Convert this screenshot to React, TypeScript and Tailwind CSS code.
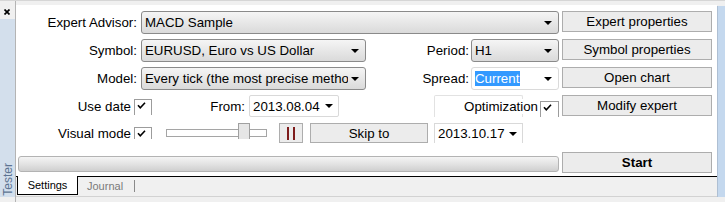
import React from 'react';

const Arrow = () => (
  <svg width="8" height="4" viewBox="0 0 8 4" className="shrink-0">
    <polygon points="0,0 8,0 4,4" fill="#000" />
  </svg>
);

const Check = () => (
  <svg width="9" height="7" viewBox="0 0 9 7">
    <path d="M1 3.2 L3.3 5.8 L8 0.8" fill="none" stroke="#000" strokeWidth="1.6" />
  </svg>
);

type ComboProps = { w: string; white?: boolean; children: React.ReactNode };

const Combo = ({ w, white, children }: ComboProps) => (
  <div
    className={`${w} h-[23px] flex items-center pl-[3px] pr-[6px] rounded-[3px] border ${
      white ? 'bg-white border-[#dadada]' : 'bg-gradient-to-b from-[#f5f5f5] to-[#dadada] border-[#8a8a8a]'
    }`}
  >
    <div className="flex-1 mr-[3px] overflow-hidden whitespace-nowrap leading-[15px]">{children}</div>
    <Arrow />
  </div>
);

type BtnProps = { w: string; bold?: boolean; children: React.ReactNode };

const Btn = ({ w, bold, children }: BtnProps) => (
  <button
    className={`${w} h-[21px] shrink-0 border border-[#adadad] bg-[#ececec] flex items-center justify-center leading-[15px] ${
      bold ? 'font-bold' : ''
    }`}
  >
    {children}
  </button>
);

const Label = ({ w, children }: { w: string; children: React.ReactNode }) => (
  <div className={`${w} h-[23px] shrink-0 flex items-center justify-end pr-[4px] whitespace-nowrap`}>{children}</div>
);

export default function App() {
  return (
    <div className="w-[725px] h-[202px] overflow-hidden bg-[#f0f0f0] border-t border-[#d6d6d6] flex font-['Liberation_Sans',Arial,sans-serif] text-[13.3px] text-black">
      {/* left dock strip */}
      <div className="w-[15px] h-full flex flex-col">
        <div className="h-[18px] pl-[4px] pt-[8px]">
          <svg width="6" height="6" viewBox="0 0 6 6">
            <path d="M0.5 0.5 L5.5 5.5 M5.5 0.5 L0.5 5.5" stroke="#000" strokeWidth="1.7" />
          </svg>
        </div>
        <div className="h-[178px] bg-[#d3dfec] flex flex-col justify-end items-center pb-[1px]">
          <div className="[writing-mode:vertical-rl] rotate-180 text-[12px] leading-[12px] text-[#5d7492]">Tester</div>
        </div>
      </div>

      {/* main column */}
      <div className="w-[702px] h-full border-l border-[#b4b4b4] flex flex-col">
        <div className="h-[4px]" />
        <div className="h-[171px] bg-white flex flex-col pt-[6px]">
          {/* row 1 */}
          <div className="h-[23px] flex items-start">
            <Label w="w-[125px]">Expert Advisor:</Label>
            <Combo w="w-[418px]">MACD Sample</Combo>
            <div className="ml-[3px]">
              <Btn w="w-[150px]">Expert properties</Btn>
            </div>
          </div>
          {/* row 2 */}
          <div className="h-[23px] mt-[5px] flex items-start">
            <Label w="w-[125px]">Symbol:</Label>
            <Combo w="w-[225px]">EURUSD, Euro vs US Dollar</Combo>
            <div className="w-[105px] h-[23px] flex items-center justify-end pr-[2px]">Period:</div>
            <Combo w="w-[88px]">H1</Combo>
            <div className="ml-[3px]">
              <Btn w="w-[150px]">Symbol properties</Btn>
            </div>
          </div>
          {/* row 3 */}
          <div className="h-[23px] mt-[5px] flex items-start">
            <Label w="w-[125px]">Model:</Label>
            <Combo w="w-[225px]">Every tick (the most precise method)</Combo>
            <div className="w-[105px] h-[23px] flex items-center justify-end pr-[2px]">Spread:</div>
            <Combo w="w-[88px]" white>
              <span className="bg-[#3399ff] text-white pr-[1px]">Current</span>
            </Combo>
            <div className="ml-[3px]">
              <Btn w="w-[150px]">Open chart</Btn>
            </div>
          </div>
          {/* row 4 */}
          <div className="h-[23px] mt-[5px] flex items-start">
            <div className="w-[118px] h-[23px] flex items-center justify-end pr-[3px]">Use date</div>
            <div className="w-[18px] h-[16px] mt-[4px] border-l border-t border-r border-[#9c9c9c] bg-white pl-[2px] pt-[2px]">
              <Check />
            </div>
            <div className="w-[97px] h-[23px] flex items-center justify-end pr-[4px]">From:</div>
            <div className="w-[90px] h-[22px] flex items-center pl-[3px] pr-[5px] border border-[#d9d9d9] rounded-[2px] bg-white">
              <div className="flex-1 leading-[15px]">2013.08.04</div>
              <Arrow />
            </div>
            <div className="relative w-[125px] h-[22px] ml-[95px]">
              <div className="absolute left-0 top-0 w-[89px] h-[22px] border-l border-t border-r border-[#e2e2e2] rounded-t-[2px]" />
              <div className="relative h-[22px] flex items-start justify-end">
                <span className="bg-white leading-[15px] mt-[4px] pr-[2px]">Optimization</span>
                <div className="w-[19px] h-[16px] mt-[6px] border-l border-t border-r border-[#9c9c9c] bg-white pl-[2px] pt-[2px]">
                  <Check />
                </div>
              </div>
            </div>
            <div className="ml-[3px]">
              <Btn w="w-[150px]">Modify expert</Btn>
            </div>
          </div>
          {/* row 5 */}
          <div className="h-[20px] mt-[5px] flex items-start">
            <div className="w-[118px] h-[16px] overflow-hidden flex justify-end pr-[3px] pt-[3px] leading-[15px]">Visual mode</div>
            <div className="w-[18px] h-[12px] mt-[4px] border-l border-t border-r border-[#9c9c9c] bg-white pl-[2px] pt-[2px] overflow-hidden">
              <Check />
            </div>
            <div className="relative w-[101px] h-[16px] ml-[14px] overflow-hidden">
              <div className="mt-[6px] h-[8px] border border-[#a5a5a5] bg-white" />
              <div className="absolute left-[72px] top-0 w-[12px] h-[18px] border border-[#a0a0a0] bg-[#e6e6e6]" />
            </div>
            <button className="w-[24px] h-[20px] ml-[12px] border border-[#adadad] bg-[#ececec] flex items-center justify-center gap-[4px]">
              <div className="w-[2px] h-[13px] bg-[#7e1c1c]" />
              <div className="w-[2px] h-[13px] bg-[#7e1c1c]" />
            </button>
            <button className="w-[118px] h-[20px] ml-[7px] border border-[#adadad] bg-[#ececec] flex items-center justify-center leading-[15px]">
              Skip to
            </button>
            <div className="w-[89px] h-[20px] ml-[6px] flex items-center pl-[3px] pr-[5px] border-l border-t border-r border-[#d9d9d9] bg-white">
              <div className="flex-1 leading-[15px]">2013.10.17</div>
              <Arrow />
            </div>
          </div>
          {/* row 6 */}
          <div className="h-[21px] mt-[9px] flex items-start">
            <div className="w-[541px] h-[16px] ml-[2px] mt-[4px] rounded-[3px] border border-[#b3b3b3] bg-gradient-to-b from-[#f4f4f4] via-[#e3e3e3] to-[#cfcfcf]" />
            <div className="ml-[3px]">
              <Btn w="w-[150px]" bold>
                Start
              </Btn>
            </div>
          </div>
        </div>

        {/* tabs */}
        <div className="h-[19px] flex items-start text-[11px] leading-[13px]">
          <div className="w-[1px] h-[19px] border-t border-black" />
          <div className="w-[61px] h-[19px] bg-white border-l border-r border-b border-black flex items-center justify-center">
            Settings
          </div>
          <div className="flex-1 h-[19px] border-t border-black flex items-center">
            <span className="ml-[9px] text-[#7a7a7a]">Journal</span>
            <div className="ml-[11px] w-[1px] h-[12px] bg-[#8a8a8a]" />
          </div>
        </div>
        <div className="mt-[1px] border-t border-[#d2d2d2]" />
      </div>

      {/* right dock strip */}
      <div className="w-[8px] h-full flex flex-col">
        <div className="h-[5px]" />
        <div className="h-[191px] bg-[#c4d8ee] border-l border-[#aebfd3]" />
      </div>
    </div>
  );
}
